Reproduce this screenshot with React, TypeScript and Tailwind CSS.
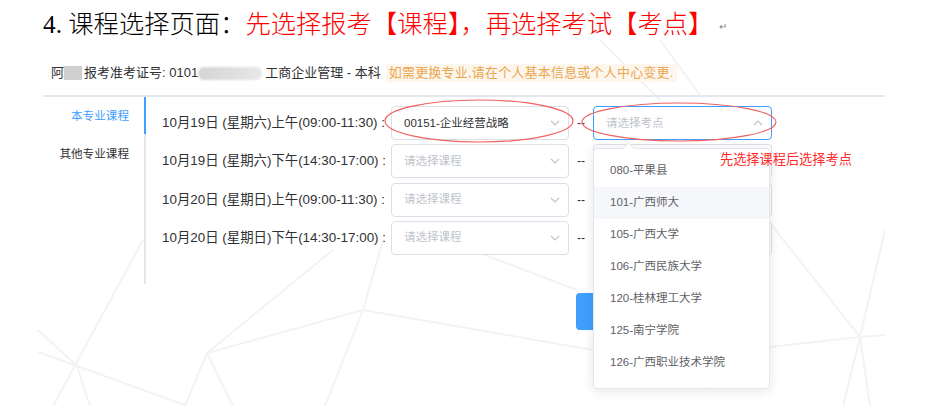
import React from "react";

const sans = { fontFamily: '"Liberation Sans","Noto Sans CJK SC",sans-serif' };

function Chevron({ up = false }: { up?: boolean }) {
  return (
    <svg width="10" height="6" viewBox="0 0 10 6" className="shrink-0">
      <polyline
        points={up ? "1,5 5,1 9,5" : "1,1 5,5 9,1"}
        fill="none"
        stroke="#c0c4cc"
        strokeWidth="1.2"
      />
    </svg>
  );
}

const rows = [
  { label: "10月19日 (星期六)上午(09:00-11:30) :", value: "00151-企业经营战略" },
  { label: "10月19日 (星期六)下午(14:30-17:00) :", value: "" },
  { label: "10月20日 (星期日)上午(09:00-11:30) :", value: "" },
  { label: "10月20日 (星期日)下午(14:30-17:00) :", value: "" },
];

const options = [
  "080-平果县",
  "101-广西师大",
  "105-广西大学",
  "106-广西民族大学",
  "120-桂林理工大学",
  "125-南宁学院",
  "126-广西职业技术学院",
  "130-广西外国语学院",
];

const bgLines: [number, number, number, number][] = [
  [143, 240, 53, 406],
  [38, 352, 77, 366],
  [77, 366, 187, 406],
  [77, 366, 90, 406],
  [38, 330, 77, 366],
  [207, 353, 363, 310],
  [207, 353, 185, 406],
  [207, 353, 233, 406],
  [207, 353, 333, 250],
  [363, 310, 383, 240],
  [363, 310, 325, 406],
  [363, 310, 593, 350],
  [480, 253, 577, 290],
  [770, 223, 860, 337],
  [770, 347, 860, 337],
  [860, 337, 885, 335],
  [885, 230, 860, 337],
  [860, 337, 843, 406],
  [860, 337, 870, 406],
  [600, 40, 660, 100],
  [660, 40, 700, 95],
];

export default function App() {
  return (
    <div className="relative w-[935px] h-[406px] overflow-hidden bg-white">
      {/* faint background geometry */}
      <svg className="absolute inset-0 pointer-events-none" width="935" height="406">
        {bgLines.map(([x1, y1, x2, y2], i) => (
          <line key={i} x1={x1} y1={y1} x2={x2} y2={y2} stroke="#f3f3f3" strokeWidth="2" />
        ))}
      </svg>

      <div className="relative">
        {/* Title */}
        <div
          className="pt-[9px] pl-[43px] text-[25.3px] leading-[30px] font-light text-black whitespace-nowrap"
          style={{ fontFamily: '"Liberation Serif","Noto Sans CJK SC",serif' }}
        >
          <span>4. </span>
          <span>课程选择页面：</span>
          <span className="text-[#ff0000]">先选择报考【课程】，再选择考试【考点】</span>
          <span className="text-[10px] text-[#888] ml-[6px] align-middle">↵</span>
        </div>

        {/* Info row */}
        <div
          className="mt-[21px] pl-[51px] h-[20px] flex items-center text-[13px] text-[#303133] whitespace-nowrap"
          style={sans}
        >
          <span>阿</span>
          <span className="inline-block w-[18px] h-[14px] bg-[#cfcfcf] blur-[0.6px]" />
          <span className="ml-[2px]">报考准考证号: 0101</span>
          <span className="inline-block w-[64px] h-[13px] rounded-[6px] bg-gradient-to-r from-[#d4d4d4] to-[#e8e8e8] blur-[1px]" />
          <span className="ml-[3px]">工商企业管理 - 本科</span>
          <span className="ml-[5px] h-[18px] leading-[18px] px-[3px] bg-[#fdf6ec] text-[#eba650] tracking-[0.2px]">
            如需更换专业,请在个人基本信息或个人中心变更.
          </span>
        </div>

        {/* divider */}
        <div className="mt-[12px] ml-[43px] w-[842px] h-[2px] bg-[#e4e7ed]" />

        {/* Main */}
        <div className="flex" style={sans}>
          {/* Tabs */}
          <div className="relative ml-[43px] w-[103px] h-[187px] border-r-2 border-[#e4e7ed] flex flex-col">
            <div className="absolute right-[-2px] top-0 w-[2px] h-[37px] bg-[#409eff]" />
            <div className="h-[38px] flex items-center justify-end pr-[15px] text-[11.6px] text-[#409eff]">
              本专业课程
            </div>
            <div className="h-[38px] flex items-center justify-end pr-[15px] text-[11.6px] text-[#303133]">
              其他专业课程
            </div>
          </div>

          {/* Rows */}
          <div className="pl-[16px] pt-[9px] flex flex-col">
            <div className="flex flex-col gap-[4.3px]">
              {rows.map((r, i) => (
                <div key={i} className="flex items-center h-[34px]">
                  <div className="w-[229px] text-[13.4px] text-[#303133] whitespace-nowrap">{r.label}</div>
                  <div className="w-[178px] h-[34px] border border-[#dcdfe6] rounded-[4px] bg-white flex items-center pl-[12px] pr-[8px]">
                    <span
                      className={
                        "flex-1 text-[11.5px] whitespace-nowrap " +
                        (r.value ? "text-[#303133]" : "text-[#c0c4cc]")
                      }
                    >
                      {r.value || "请选择课程"}
                    </span>
                    <Chevron />
                  </div>
                  <div className="w-[24px] text-center text-[12px] text-[#303133]">--</div>
                  <div
                    className={
                      "w-[179px] h-[34px] border rounded-[4px] bg-white flex items-center pl-[12px] pr-[8px] " +
                      (i === 0 ? "border-[#409eff]" : "border-[#dcdfe6]")
                    }
                  >
                    {i === 0 ? (
                      <span className="flex-1 text-[11.5px] text-[#c0c4cc] whitespace-nowrap">请选择考点</span>
                    ) : (
                      <span className="flex-1" />
                    )}
                    <Chevron up={i === 0} />
                  </div>
                </div>
              ))}
            </div>
            <div className="mt-[38px] ml-[414px] w-[86px] h-[37px] rounded-[4px] bg-[#409eff]" />
          </div>
        </div>
      </div>

      {/* Dropdown */}
      <div
        className="absolute left-[593px] top-[148px] w-[177px] h-[241px] bg-white border border-[#e4e7ed] rounded-[4px] shadow-[0_2px_12px_0_rgba(0,0,0,0.1)]"
        style={sans}
      >
        <div className="absolute left-[30px] top-[-5px] w-[9px] h-[9px] rotate-45 bg-white border-l border-t border-[#e4e7ed]" />
        <div className="relative h-full overflow-hidden pt-[6px]">
          {options.map((o, i) => (
            <div
              key={o}
              className={
                "h-[32px] flex items-center pl-[16px] text-[11.5px] text-[#606266] whitespace-nowrap " +
                (i === 1 ? "bg-[#f5f7fa]" : "")
              }
            >
              {o}
            </div>
          ))}
        </div>
      </div>

      {/* annotation */}
      <div
        className="absolute left-[720px] top-[150px] text-[13.2px] leading-[20px] text-[#ff2a2a] whitespace-nowrap"
        style={sans}
      >
        先选择课程后选择考点
      </div>

      {/* red ellipses */}
      <svg className="absolute inset-0 pointer-events-none" width="935" height="406">
        <ellipse cx="479" cy="121" rx="94" ry="21" fill="none" stroke="#f06060" strokeWidth="1.2" />
        <ellipse cx="679" cy="122" rx="97" ry="19" fill="none" stroke="#f06060" strokeWidth="1.2" />
      </svg>
    </div>
  );
}
